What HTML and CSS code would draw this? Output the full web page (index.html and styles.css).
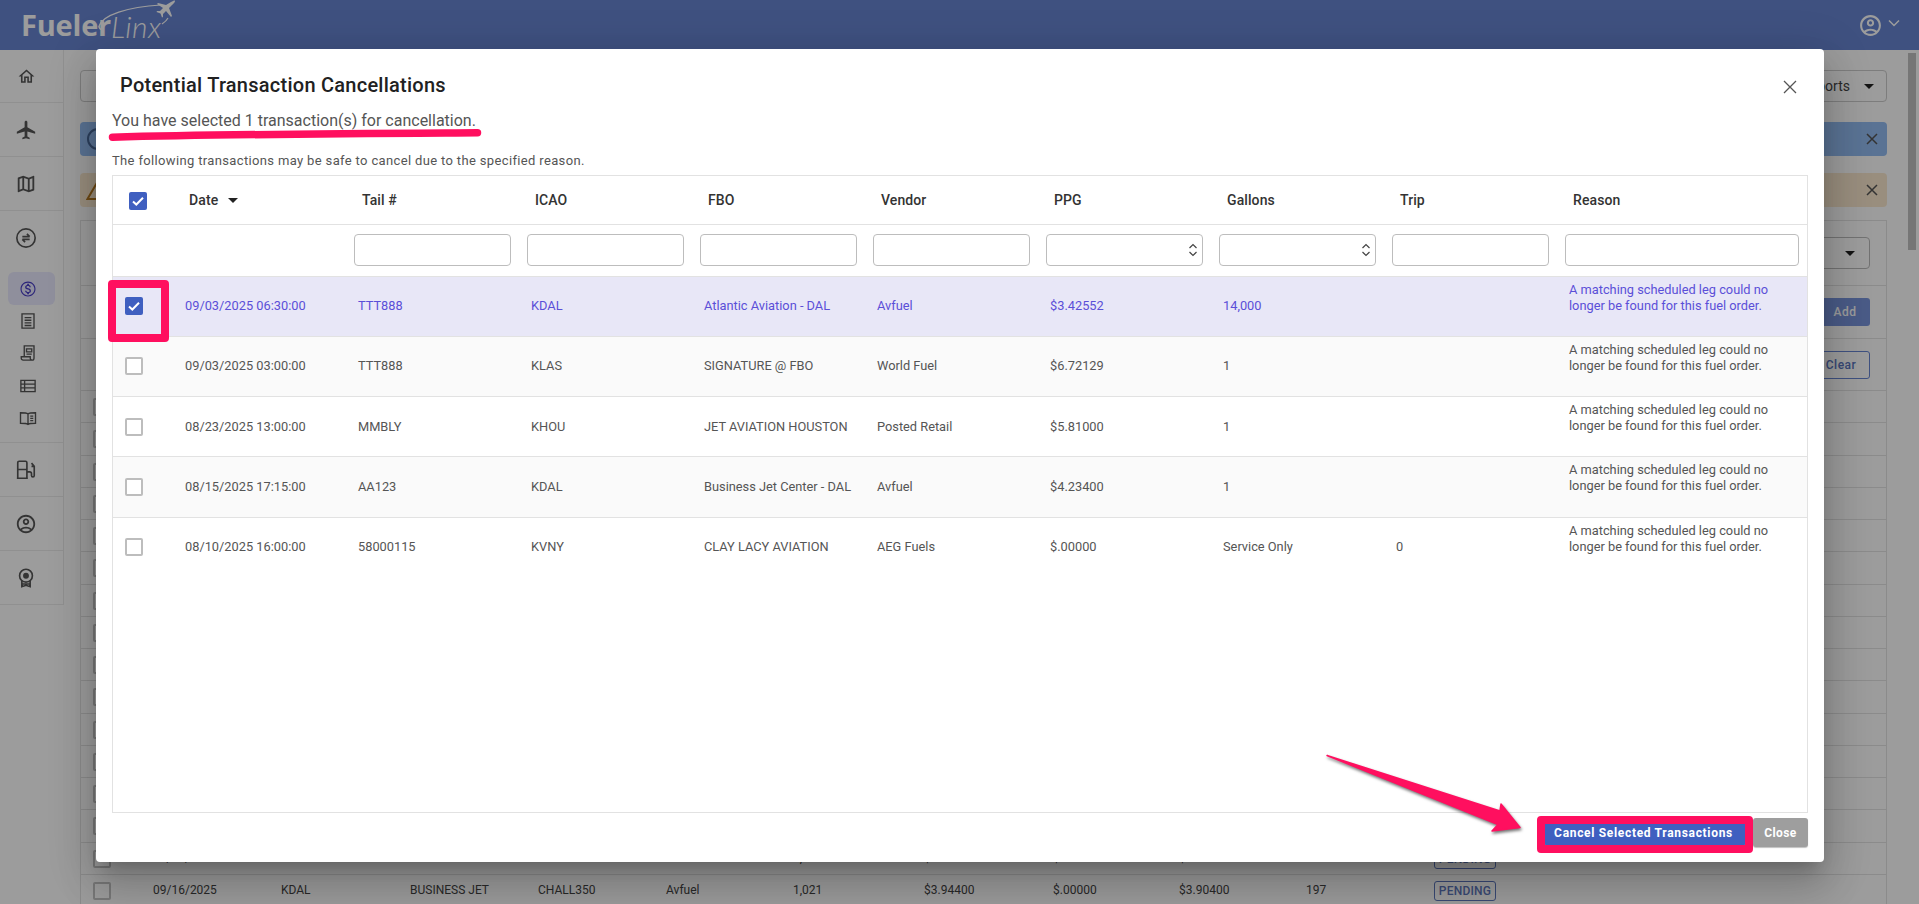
FILE: index.html
```html
<!DOCTYPE html>
<html lang="en">
<head>
<meta charset="utf-8">
<title>FuelerLinx</title>
<link rel="stylesheet" href="styles.css">
</head>
<body>
<header class="topbar">
  <div class="logo">
    <span class="logo-a">Fueler</span><span class="logo-b">Linx</span>
    <svg class="logo-mark" viewBox="0 0 90 40" width="90" height="40">
      <path d="M2 26C6 15 30 7 64 5" fill="none" stroke="currentColor" stroke-width="1.2"/>
      <path d="M2 26c0 3 2 4 5 3" fill="none" stroke="currentColor" stroke-width="1.6"/>
      <path d="M71 18c-1 2-3 4-6 6" fill="none" stroke="currentColor" stroke-width="1.2"/>
      <path d="M60 4l1-1 8 2 5-3c2-1 4-2 4-1s-1 2-3 4l-3 3 3 8-1 1-5-6-3 3 0 3-1 .5-1.500-4-4-1.500.5-1 3 0 3-3z" fill="currentColor"/>
    </svg>
  </div>
  <div class="account">
    <svg viewBox="0 0 24 24" width="25" height="25"><path fill="currentColor" d="M12 2C6.480 2 2 6.480 2 12s4.480 10 10 10 10-4.480 10-10S17.520 2 12 2zM7.350 18.500C8.660 17.560 10.260 17 12 17s3.340.56 4.650 1.500c-1.310.94-2.910 1.500-4.650 1.500s-3.340-.56-4.650-1.500zm10.790-1.380C16.450 15.800 14.320 15 12 15s-4.450.8-6.140 2.120C4.700 15.730 4 13.950 4 12c0-4.420 3.580-8 8-8s8 3.580 8 8c0 1.950-.7 3.730-1.860 5.120zM12 6c-1.930 0-3.500 1.570-3.500 3.500S10.070 13 12 13s3.500-1.570 3.500-3.500S13.930 6 12 6zm0 5c-.83 0-1.500-.67-1.500-1.500S11.170 8 12 8s1.500.67 1.500 1.500S12.830 11 12 11z"/></svg>
    <svg viewBox="0 0 12 8" width="12" height="8"><path d="M1 1.500l5 5 5-5" fill="none" stroke="currentColor" stroke-width="1.500"/></svg>
  </div>
</header>

<div class="app">
  <nav class="sidebar">
    <div class="nav-sec">
      <svg class="ico ico-home" viewBox="0 0 24 24"><path d="M12 5.690l5 4.500V18h-2v-6H9v6H7v-7.810l5-4.500M12 3L2 12h3v8h6v-6h2v6h6v-8h3L12 3z"/></svg>
    </div>
    <div class="nav-sec">
      <svg class="ico" viewBox="0 0 24 24"><path d="M22 16v-2l-8.500-5V3.500c0-.83-.67-1.500-1.500-1.500s-1.500.67-1.500 1.500V9L2 14v2l8.500-2.500V19L8 20.500V22l4-1 4 1v-1.500L13.500 19v-5.500L22 16z"/></svg>
    </div>
    <div class="nav-sec">
      <svg class="ico" viewBox="0 0 24 24"><path d="M20.500 3l-.16.03L15 5.100 9 3 3.360 4.900c-.21.07-.36.25-.36.48V20.500c0 .28.22.5.5.5l.16-.03L9 18.900l6 2.100 5.640-1.900c.21-.07.36-.25.36-.48V3.500c0-.28-.22-.5-.5-.5zM10 5.470l4 1.400v11.660l-4-1.400V5.470zm-5 .99l3-1.010v11.700l-3 1.160V6.460zm14 11.080l-3 1.010V6.860l3-1.160v11.840z"/></svg>
    </div>
    <div class="nav-sec nav-group">
      <svg class="ico line" viewBox="0 0 24 24"><circle cx="12" cy="12" r="10"/><path d="M8 10.500h8M13 7.500l3 3M16 13.500H8M11 16.500l-3-3"/></svg>
    </div>
    <div class="nav-sub">
      <div class="nav-item active">
        <svg class="ico" viewBox="0 0 24 24"><path d="M12 2C6.480 2 2 6.480 2 12s4.480 10 10 10 10-4.480 10-10S17.520 2 12 2zm0 18.500c-4.690 0-8.500-3.810-8.500-8.500S7.310 3.500 12 3.500s8.500 3.810 8.500 8.500-3.810 8.500-8.500 8.500zm.31-9.360c-1.770-.45-2.340-.94-2.340-1.670 0-.84.79-1.430 2.100-1.430 1.380 0 1.900.66 1.940 1.640h1.710c-.05-1.340-.87-2.570-2.490-2.970V5H10.900v1.690c-1.510.32-2.720 1.300-2.720 2.810 0 1.790 1.490 2.690 3.660 3.210 1.950.46 2.340 1.150 2.340 1.870 0 .53-.39 1.390-2.100 1.390-1.600 0-2.230-.72-2.320-1.640H8.040c.1 1.700 1.360 2.660 2.860 2.970V19h2.340v-1.670c1.520-.29 2.720-1.160 2.730-2.770-.01-2.200-1.900-2.960-3.660-3.420z"/></svg>
      </div>
      <div class="nav-item">
        <svg class="ico line" viewBox="0 0 24 24"><path d="M4 2.500h16v19H4zM7.500 7.500h9M7.500 11h9M7.500 14.500h9M7.500 18h9"/></svg>
      </div>
      <div class="nav-item">
        <svg class="ico line" viewBox="0 0 24 24"><path d="M7 17V2.500h13V19a2.500 2.500 0 01-2.500 2.500h-12A2.500 2.500 0 013 19v-2h12v2a2.500 2.500 0 002.500 2.500M10 6.500h7v4h-7zM10 13.500h7"/></svg>
      </div>
      <div class="nav-item">
        <svg class="ico line" viewBox="0 0 24 24"><path d="M2.500 4.500h19v15h-19zM2.500 9.500h19M2.500 14.500h19M7.500 4.500v15"/></svg>
      </div>
      <div class="nav-item">
        <svg class="ico line" viewBox="0 0 24 24"><path d="M12 6.500C10 5 6 5 2 5v14c4 0 8 0 10 1.500 2-1.500 6-1.500 10-1.500V5c-4 0-8 0-10 1.500zM12 6.500v14M15 9.500h4M15 12.500h4M15 15.500h4"/></svg>
      </div>
    </div>
    <div class="nav-sec">
      <svg class="ico line" viewBox="0 0 24 24"><path d="M3 21V4a1.500 1.500 0 011.500-1.500h7A1.500 1.500 0 0113 4v17M2 21h12M3 11.500h10M13 14h3a2 2 0 012 2v2a1.500 1.500 0 003 0V8l-3-3.500M18 8h3"/></svg>
    </div>
    <div class="nav-sec">
      <svg class="ico" viewBox="0 0 24 24"><path d="M12 2C6.480 2 2 6.480 2 12s4.480 10 10 10 10-4.480 10-10S17.520 2 12 2zM7.350 18.500C8.660 17.560 10.260 17 12 17s3.340.56 4.650 1.500c-1.310.94-2.910 1.500-4.650 1.500s-3.340-.56-4.650-1.500zm10.790-1.380C16.450 15.800 14.320 15 12 15s-4.450.8-6.140 2.120C4.700 15.730 4 13.950 4 12c0-4.420 3.580-8 8-8s8 3.580 8 8c0 1.950-.7 3.730-1.860 5.120zM12 6c-1.930 0-3.500 1.570-3.500 3.500S10.070 13 12 13s3.500-1.570 3.500-3.500S13.930 6 12 6zm0 5c-.83 0-1.500-.67-1.500-1.500S11.170 8 12 8s1.500.67 1.500 1.500S12.830 11 12 11z"/></svg>
    </div>
    <div class="nav-sec">
      <svg class="ico line" viewBox="0 0 24 24"><circle cx="12" cy="9.500" r="7"/><circle cx="12" cy="9.500" r="2.300" class="solid"/><path d="M7.500 15v6.500l4.500-1.500 4.500 1.500V15M7.500 18.500h9"/></svg>
    </div>
  </nav>

  <main class="content">
    <div class="toolbar">
      <div class="tbtn tbtn-left"></div>
      <div class="tbtn tbtn-right">Reports <span class="caret"></span></div>
    </div>
    <div class="alert alert-info">
      <svg class="alert-ico" viewBox="0 0 24 24"><circle cx="12" cy="12" r="10" fill="none" stroke="currentColor" stroke-width="2"/><path d="M11 10.500h2V17h-2zM11 7h2v2h-2z" fill="currentColor"/></svg>
      <svg class="alert-x" viewBox="0 0 12 12"><path d="M1 1l10 10M11 1L1 11"/></svg>
    </div>
    <div class="alert alert-warn">
      <svg class="alert-ico" viewBox="0 0 24 24"><path d="M12 3L1.500 21h21L12 3z" fill="none" stroke="currentColor" stroke-width="2"/><path d="M11 10h2v6h-2zM11 17h2v2h-2z" fill="currentColor"/></svg>
      <svg class="alert-x" viewBox="0 0 12 12"><path d="M1 1l10 10M11 1L1 11"/></svg>
    </div>
    <section class="card">
      <div class="card-row card-row-a"><div class="bg-select"><span class="caret"></span></div></div>
      <div class="card-row card-row-b"><div class="bg-add">Add</div></div>
      <div class="card-row card-row-c"><div class="bg-clear">Clear</div></div>
      <div class="bg-row"><span class="bg-check"></span></div>
      <div class="bg-row"><span class="bg-check"></span></div>
      <div class="bg-row"><span class="bg-check"></span></div>
      <div class="bg-row"><span class="bg-check"></span></div>
      <div class="bg-row"><span class="bg-check"></span></div>
      <div class="bg-row"><span class="bg-check"></span></div>
      <div class="bg-row"><span class="bg-check"></span></div>
      <div class="bg-row"><span class="bg-check"></span></div>
      <div class="bg-row"><span class="bg-check"></span></div>
      <div class="bg-row"><span class="bg-check"></span></div>
      <div class="bg-row"><span class="bg-check"></span></div>
      <div class="bg-row"><span class="bg-check"></span></div>
      <div class="bg-row"><span class="bg-check"></span></div>
      <div class="bg-row"><span class="bg-check"></span></div>
      <div class="bg-row">
        <span class="bg-check"></span><span class="c1">09/16/2025</span><span class="c2">KDAL</span><span class="c3">BUSINESS JET</span><span class="c4">CHALL350</span><span class="c5">Avfuel</span><span class="c6">1,021</span><span class="c7">$3.94400</span><span class="c8">$.00000</span><span class="c9">$3.90400</span><span class="c10">197</span><span class="badge">PENDING</span>
      </div>
      <div class="bg-row">
        <span class="bg-check"></span><span class="c1">09/16/2025</span><span class="c2">KDAL</span><span class="c3">BUSINESS JET</span><span class="c4">CHALL350</span><span class="c5">Avfuel</span><span class="c6">1,021</span><span class="c7">$3.94400</span><span class="c8">$.00000</span><span class="c9">$3.90400</span><span class="c10">197</span><span class="badge">PENDING</span>
      </div>
    </section>
  </main>
  <div class="scrolltrack"><div class="scrollthumb"></div></div>
</div>

<div class="backdrop"></div>

<div class="modal" role="dialog">
  <div class="modal-head">
    <h2 class="modal-title">Potential Transaction Cancellations</h2>
    <svg class="modal-x" viewBox="0 0 14 14"><path d="M1 1l12 12M13 1L1 13"/></svg>
  </div>
  <p class="selected-note">You have selected 1 transaction(s) for cancellation.</p>
  <p class="help-note">The following transactions may be safe to cancel due to the specified reason.</p>

  <div class="grid-box">
    <table class="grid">
      <colgroup><col class="col-check"><col span="8" class="col-data"><col class="col-last"></colgroup>
      <thead>
        <tr class="head-row">
          <th class="th-check"><span class="check on"><svg viewBox="0 0 18 18"><path d="M4 9.500l3.300 3L14 5.800"/></svg></span></th>
          <th>Date <span class="sort"></span></th>
          <th>Tail #</th><th>ICAO</th><th>FBO</th><th>Vendor</th><th>PPG</th><th>Gallons</th><th>Trip</th><th>Reason</th>
        </tr>
        <tr class="filter-row">
          <td></td><td></td>
          <td><input class="flt" type="text"></td>
          <td><input class="flt" type="text"></td>
          <td><input class="flt" type="text"></td>
          <td><input class="flt" type="text"></td>
          <td><div class="spin"><input class="flt" type="text"><svg viewBox="0 0 10 16"><path d="M1.500 6l3.500-3.500L8.500 6M1.500 10l3.500 3.500L8.500 10"/></svg></div></td>
          <td><div class="spin"><input class="flt" type="text"><svg viewBox="0 0 10 16"><path d="M1.500 6l3.500-3.500L8.500 6M1.500 10l3.500 3.500L8.500 10"/></svg></div></td>
          <td><input class="flt" type="text"></td>
          <td><input class="flt" type="text"></td>
        </tr>
      </thead>
      <tbody>
        <tr class="selected">
          <td><span class="check on"><svg viewBox="0 0 18 18"><path d="M4 9.500l3.300 3L14 5.800"/></svg></span></td>
          <td>09/03/2025 06:30:00</td><td>TTT888</td><td>KDAL</td><td>Atlantic Aviation - DAL</td><td>Avfuel</td><td>$3.42552</td><td>14,000</td><td></td>
          <td class="reason">A matching scheduled leg could no longer be found for this fuel order.</td>
        </tr>
        <tr class="alt">
          <td><span class="check"></span></td>
          <td>09/03/2025 03:00:00</td><td>TTT888</td><td>KLAS</td><td>SIGNATURE @ FBO</td><td>World Fuel</td><td>$6.72129</td><td>1</td><td></td>
          <td class="reason">A matching scheduled leg could no longer be found for this fuel order.</td>
        </tr>
        <tr>
          <td><span class="check"></span></td>
          <td>08/23/2025 13:00:00</td><td>MMBLY</td><td>KHOU</td><td>JET AVIATION HOUSTON</td><td>Posted Retail</td><td>$5.81000</td><td>1</td><td></td>
          <td class="reason">A matching scheduled leg could no longer be found for this fuel order.</td>
        </tr>
        <tr class="alt">
          <td><span class="check"></span></td>
          <td>08/15/2025 17:15:00</td><td>AA123</td><td>KDAL</td><td>Business Jet Center - DAL</td><td>Avfuel</td><td>$4.23400</td><td>1</td><td></td>
          <td class="reason">A matching scheduled leg could no longer be found for this fuel order.</td>
        </tr>
        <tr>
          <td><span class="check"></span></td>
          <td>08/10/2025 16:00:00</td><td>58000115</td><td>KVNY</td><td>CLAY LACY AVIATION</td><td>AEG Fuels</td><td>$.00000</td><td>Service Only</td><td>0</td>
          <td class="reason">A matching scheduled leg could no longer be found for this fuel order.</td>
        </tr>
      </tbody>
    </table>
  </div>

  <div class="modal-foot">
    <button class="btn btn-primary" type="button">Cancel Selected Transactions</button>
    <button class="btn btn-close" type="button">Close</button>
  </div>
</div>

<svg class="marks" viewBox="0 0 1919 904" width="1919" height="904">
  <path class="mark-line" d="M112.500 137.200C230 134 360 133.500 477.500 132.800"/>
  <path class="mark-arrow" d="M1327 755.500L1500 811L1501 804L1520 827.500L1492 831L1498 824.500Z"/>
</svg>
<div class="mark-box mark-check"></div>
<div class="mark-box mark-cancel"></div>
</body>
</html>
```
FILE: styles.css
```css
* { box-sizing: border-box; }
html, body { margin: 0; height: 904px; overflow: hidden; }
body { font-family: Roboto, "Liberation Sans", sans-serif; background: #fff; color: #333; position: relative; }

.topbar { height: 50px; background: #6785d2; color: #fff; display: flex; justify-content: space-between; align-items: center; position: relative; }
.logo { position: relative; margin-left: 21px; height: 50px; width: 150px; }
.logo-a { position: absolute; left: 0; top: 5px; font: 700 29px/40px "Open Sans", sans-serif; letter-spacing: -.2px; }
.logo-b { position: absolute; left: 90px; top: 6px; font: italic 300 30px/40px "Lato", sans-serif; letter-spacing: .4px; }
.logo-mark { position: absolute; left: 76px; top: 0; }
.account { display: flex; align-items: center; gap: 5px; margin-right: 19px; color: #fff; }
.account svg:last-child { margin-top: -4px; }

.app { display: flex; height: 854px; }
.sidebar { width: 64px; flex: none; border-right: 1px solid #ececec; height: 555px; border-bottom: 1px solid #ececec; background: #fff; }
.nav-sec { height: 54px; display: flex; align-items: center; padding-left: 15px; border-bottom: 1px solid #ececec; }
.nav-sec:first-child { height: 53px; }
.nav-group { border-bottom: 0; height: 54px; }
.nav-sub { height: 178px; padding-top: 7px; border-bottom: 1px solid #ececec; }
.nav-item { height: 32.300px; margin: 0 8px; display: flex; align-items: center; padding-left: 11px; border-radius: 6px; }
.nav-item.active { background: #eaeaff; height: 33px; margin-bottom: 0; padding-left: 11px; }
.ico { width: 22px; height: 22px; fill: #555; flex: none; }
.ico-home { width: 19px; height: 19px; margin-left: 2px; }
.nav-item .ico { width: 18px; height: 18px; }
.nav-item.active .ico { fill: #4a3fc8; }
.ico.line { fill: none; stroke: #555; stroke-width: 1.800; }
.ico.line .solid { fill: #555; }

.content { flex: 1; min-width: 0; padding: 20px 16px 0; }
.toolbar { display: flex; justify-content: space-between; height: 32px; }
.tbtn { border: 1px solid #ccc; border-radius: 4px; height: 32px; display: flex; align-items: center; gap: 14px; padding: 0 12px; font-size: 14px; color: #444; }
.tbtn-left { width: 200px; }
.caret { display: inline-block; width: 0; height: 0; border: 5px solid transparent; border-top-color: #222; border-bottom: 0; }
.alert { height: 34px; margin-top: 17px; border-radius: 4px; display: flex; align-items: center; justify-content: space-between; padding: 0 9px 0 6px; }
.toolbar + .alert { margin-top: 20px; }
.alert-info { background: #93bcf2; color: #4a6a9a; }
.alert-warn { background: #fbe9cf; color: #b67a22; }
.alert-ico { width: 24px; height: 24px; }
.alert-x { width: 12px; height: 12px; fill: none; stroke: #555; stroke-width: 1.500; }
.card { margin-top: 13px; border: 1px solid #e4e4e4; border-bottom: 0; }
.card-row { position: relative; border-bottom: 1px solid #e4e4e4; display: flex; align-items: center; justify-content: flex-end; padding-right: 16px; }
.card-row-a { height: 65px; }
.card-row-b { height: 53px; }
.card-row-c { height: 52px; }
.bg-select { width: 200px; height: 32px; border: 1px solid #bbb; border-radius: 4px; display: flex; align-items: center; justify-content: flex-end; padding-right: 14px; }
.bg-add { height: 28px; width: 50px; background: #7a96dd; color: #fff; border-radius: 3px; font: 500 12px/28px Roboto, sans-serif; letter-spacing: .5px; text-align: center; }
.bg-clear { height: 28px; width: 58px; border: 1px solid #6785d2; color: #5a76c0; border-radius: 3px; font: 500 12px/26px Roboto, sans-serif; letter-spacing: .5px; text-align: center; }
.bg-row { position: relative; height: 32.270px; border-bottom: 1px solid #e4e4e4; font-size: 12px; color: #444; }
.bg-row > span { position: absolute; top: 7px; line-height: 16px; white-space: nowrap; }
.bg-row > .bg-check { left: 12px; top: 7px; width: 18px; height: 18px; border: 2px solid #c4c4c4; border-radius: 2px; }
.c1 { left: 72px; } .c2 { left: 200px; } .c3 { left: 329px; } .c4 { left: 457px; } .c5 { left: 585px; }
.c6 { left: 712px; } .c7 { left: 843px; } .c8 { left: 972px; } .c9 { left: 1098px; } .c10 { left: 1225px; }
.bg-row > .badge { left: 1353px; top: 6px; width: 62px; height: 20px; border: 1px solid #5f79c0; border-radius: 3px; color: #5f79c0; font-weight: 500; text-align: center; line-height: 18px; letter-spacing: .2px; }
.scrolltrack { width: 16px; flex: none; padding: 3px 3px 0 5px; }
.scrollthumb { height: 197px; background: #c1c1c1; }

.backdrop { position: absolute; inset: 0; background: rgba(0,0,0,.39); }

.modal { position: absolute; left: 96px; top: 49px; width: 1728px; height: 813px; background: #fff; border-radius: 4px; padding: 0 16px; display: flex; flex-direction: column; box-shadow: 0 11px 15px -7px rgba(0,0,0,.2), 0 24px 38px 3px rgba(0,0,0,.14), 0 9px 46px 8px rgba(0,0,0,.12); }
.modal-head { height: 60px; display: flex; align-items: center; justify-content: space-between; padding: 12px 8px 0; }
.modal-title { margin: 0; font-size: 20px; font-weight: 500; color: #212121; letter-spacing: .25px; }
.modal-x { width: 14px; height: 14px; margin: 3px 3px 0 0; fill: none; stroke: #555; stroke-width: 1.300; }
.selected-note { margin: 1px 0 0; height: 22px; font-size: 16px; line-height: 22px; color: #555; }
.help-note { margin: 21px 0 0; height: 16px; font-size: 13px; line-height: 16px; color: #555; letter-spacing: .35px; }
.grid-box { height: 638px; margin-top: 6px; border: 1px solid #e2e2e2; }
.grid { border-collapse: collapse; table-layout: fixed; width: 1694px; font-size: 12.800px; color: #555; }
.col-check { width: 60px; }
.col-data { width: 173px; }
.col-last { width: 250px; }
.head-row { height: 48px; }
.head-row th { text-align: left; padding: 0 16px; font-size: 14px; font-weight: 500; color: #333; border-bottom: 1px solid #e2e2e2; letter-spacing: .1px; }
.sort { display: inline-block; width: 0; height: 0; margin-left: 6px; vertical-align: 2px; border: 5px solid transparent; border-top-color: #222; border-bottom: 0; }
.filter-row { height: 52px; }
.filter-row td { padding: 0 8px; border-bottom: 1px solid #e2e2e2; }
.filter-row td:nth-child(-n+2) { padding: 0; }
.flt { display: block; width: 100%; height: 32px; border: 1px solid #bdbdbd; border-radius: 4px; background: #fff; margin: 0; padding: 0; outline: 0; }
.spin { position: relative; }
.spin svg { position: absolute; right: 5px; top: 8px; width: 10px; height: 16px; fill: none; stroke: #444; stroke-width: 1.200; }
tbody tr { height: 60.250px; }
tbody td { padding: 0 12px; border-bottom: 1px solid #e2e2e2; line-height: 16px; }
tbody tr:last-child td { border-bottom: 0; }
.alt { background: #fafafa; }
.selected { background: #e8e7f7; color: #5b4fd8; }
tbody td.reason { vertical-align: top; padding-top: 5px; }
.th-check .check { margin-top: 2px; }
.check { display: block; width: 18px; height: 18px; background: #fff; border: 2px solid #bdbdbd; border-radius: 2px; }
.check.on { background: #3f5fc0; border: 0; }
.check svg { display: block; width: 18px; height: 18px; fill: none; stroke: #fff; stroke-width: 2; }
.modal-foot { display: flex; justify-content: flex-end; gap: 8px; margin-top: 5px; }
.btn { height: 29px; border: 0; border-radius: 3px; color: #fff; font: 700 12px Roboto, sans-serif; letter-spacing: .4px; padding: 0; }
.btn-primary { width: 200px; background: #3f5fc0; letter-spacing: .68px; padding-right: 3px; }
.btn-close { width: 55px; background: #9e9e9e; box-shadow: 0 1px 1px rgba(0,0,0,.25); }

.marks { position: absolute; left: 0; top: 0; pointer-events: none; }
.mark-line { fill: none; stroke: #ff0f5f; stroke-width: 7.500; stroke-linecap: round; }
.mark-arrow { fill: #ff0f5f; stroke: #ff0f5f; stroke-width: 1.500; stroke-linejoin: round; filter: drop-shadow(1px 2px 1.500px rgba(0,0,0,.55)); }
.mark-box { position: absolute; border: 8px solid #ff0f5f; border-radius: 4px; }
.mark-check { left: 108px; top: 280px; width: 61px; height: 62px; }
.mark-cancel { left: 1537px; top: 816px; width: 216px; height: 37px; }
```
